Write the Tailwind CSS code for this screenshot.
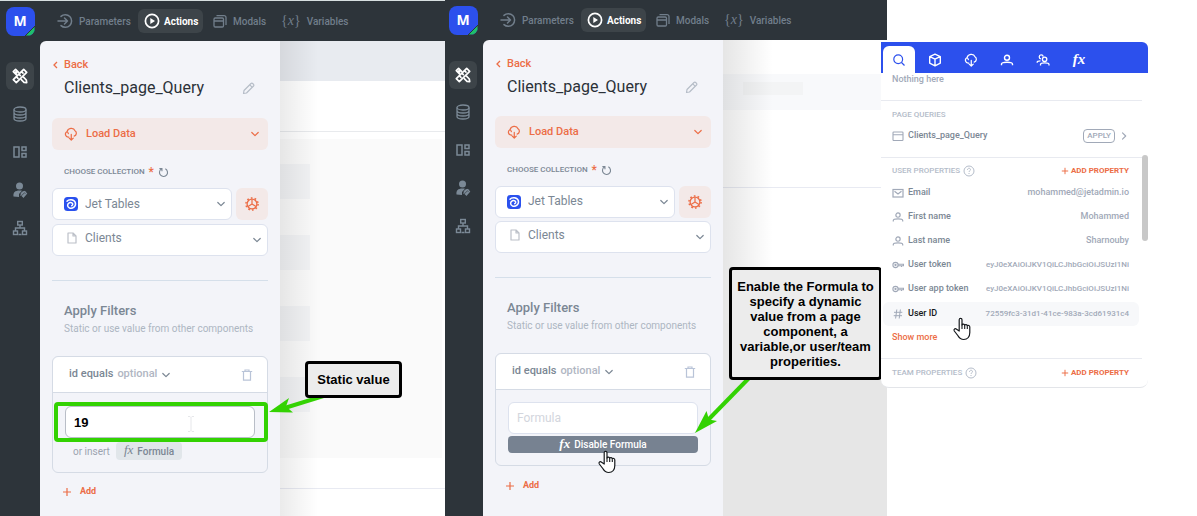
<!DOCTYPE html>
<html lang="en">
<head>
<meta charset="utf-8">
<meta name="viewport" content="width=device-width, initial-scale=1">
<title>Clients_page_Query</title>
<script src="https://cdn.jsdelivr.net/npm/@tailwindcss/browser@4"></script>
</head>
<body class="bg-white font-['Roboto','Noto_Sans',sans-serif] text-[#7b8794]">

<svg class="hidden" aria-hidden="true">
  <symbol id="enter" viewBox="0 0 16 16" fill="none" stroke="currentColor" stroke-width="1.5" stroke-linecap="round" stroke-linejoin="round"><path d="M4 3.400A6.300 6.300 0 1 1 4 12.600M1 8h9.500M7.500 5l3 3-3 3"/></symbol>
  <symbol id="play" viewBox="0 0 16 16"><circle cx="8" cy="8" r="6.600" fill="none" stroke="currentColor" stroke-width="1.700"/><path d="M6.300 5l4.700 3-4.700 3z" fill="currentColor"/></symbol>
  <symbol id="modals" viewBox="0 0 14 14" fill="none" stroke="currentColor" stroke-width="1.300" stroke-linejoin="round"><rect x="1" y="4" width="9.500" height="9" rx="1.200"/><path d="M1 7h9.500M3.500 1.600h7.500a2 2 0 0 1 2 2V11"/></symbol>
  <symbol id="tools" viewBox="0 0 16 16" fill="none" stroke="currentColor" stroke-width="1.700" stroke-linejoin="round" stroke-linecap="round"><path d="M1.300 3.600 3.600 1.300 6.800 4.500M4.500 6.800 1.300 3.600M9.300 11.600l2.700 2.700 2.700.400-.4-2.700-2.800-2.800M3.800 3.800l1 1"/><path d="M11.700 1.300 14.700 4.300 4.300 14.700 1.300 11.700zM9.500 3.700l1.500 1.500M7 6.300l1.400 1.400M4.500 8.800 6 10.300"/></symbol>
  <symbol id="database" viewBox="0 0 16 16" fill="none" stroke="currentColor" stroke-width="1.300"><ellipse cx="8" cy="3.500" rx="6" ry="2.500"/><path d="M2 3.500v9C2 14 4.700 15 8 15s6-1 6-2.500v-9M2 6.500C2 8 4.700 9 8 9s6-1 6-2.500M2 9.500C2 11 4.700 12 8 12s6-1 6-2.500"/></symbol>
  <symbol id="layout" viewBox="0 0 16 16" fill="none" stroke="currentColor" stroke-width="1.500"><rect x="2" y="3" width="5" height="10"/><rect x="10" y="3" width="4" height="3.500"/><rect x="10" y="9.500" width="4" height="3.500"/></symbol>
  <symbol id="userkey" viewBox="0 0 16 16"><circle cx="7.500" cy="4" r="3.500" fill="currentColor"/><path d="M1.500 14.500C1 10.500 3 8.500 7.500 8.500c1 0 1.800.1 2.500.3L7 12v3z" fill="currentColor"/><g fill="none" stroke="currentColor" stroke-width="1.200"><path d="M8.500 13.500l4-4 2 2-3.500 4M10 14.500l3-3M9 12c1-2 3-3.500 5-1.500"/></g></symbol>
  <symbol id="tree" viewBox="0 0 16 16" fill="none" stroke="currentColor" stroke-width="1.400"><rect x="5.700" y="1.500" width="4.600" height="3.500"/><rect x="1.500" y="11" width="4" height="3.500"/><rect x="10.500" y="11" width="4" height="3.500"/><path d="M8 5v3M3.500 11V8h9v3M6.500 14.500h3"/></symbol>
  <symbol id="cloud" viewBox="0 0 16 16" fill="none" stroke="currentColor" stroke-width="1.400" stroke-linecap="round" stroke-linejoin="round"><path d="M5.500 11.500H5A3.200 3.200 0 0 1 3.300 5.500M3.300 5.500C4.300 6 4.800 6.500 5 7.500M3.500 5.500C4.500.8 11 .3 12.600 4.300c2.400 1.600 1.900 5.300-1 6.200M8.300 8.500v6M6 12.700l2.300 2.200 2.300-2.200"/></symbol>
  <symbol id="down" viewBox="0 0 10 10" fill="none" stroke="currentColor" stroke-width="1.200" stroke-linecap="round" stroke-linejoin="round"><path d="M1.800 3.500 5 6.700l3.200-3.200"/></symbol>
  <symbol id="left" viewBox="0 0 6 10" fill="none" stroke="currentColor" stroke-width="1.300"><path d="M5 2 2 5l3 3"/></symbol>
  <symbol id="pencil" viewBox="0 0 14 14" fill="none" stroke="currentColor" stroke-width="1.200" stroke-linejoin="round"><path d="M1.500 12.500 2 9.500 9 2.500a1.200 1.200 0 0 1 1.700 0l.8.800a1.200 1.200 0 0 1 0 1.700L4.500 12zM7.800 3.800l2.500 2.500"/></symbol>
  <symbol id="reload" viewBox="0 0 12 12" fill="none" stroke="currentColor" stroke-width="1.200"><path d="M8 2a4.400 4.400 0 1 1-4.500.3M1.500 1.800h2.800v2.800"/></symbol>
  <symbol id="jet" viewBox="0 0 14 14"><rect width="14" height="14" rx="3.500" fill="#2a51ee"/><path d="M3 4.200C4.500 2.300 10 2 11.300 5.500 12.500 9.500 8.500 12 5.500 11 2.800 10 3 6.200 6 5.500c2.700-.4 3.600 2.300 1.700 3.200" fill="none" stroke="#fff" stroke-width="1.500" stroke-linecap="round"/></symbol>
  <symbol id="gear" viewBox="0 0 14 14" fill="none" stroke="currentColor"><circle cx="7" cy="7" r="4.900" stroke-width="1.300"/><circle cx="7" cy="7" r="6.100" stroke-width="1.500" stroke-dasharray="1.700 2.130"/><path d="M7 7V2.500M7 7l-4 2.500M7 7l4 2.500" stroke-width="1.200"/></symbol>
  <symbol id="file" viewBox="0 0 12 12" fill="none" stroke="currentColor" stroke-width="1.200" stroke-linejoin="round"><path d="M2 1h5l3 3v7H2zM7 1v3h3"/></symbol>
  <symbol id="trash" viewBox="0 0 12 12" fill="none" stroke="currentColor" stroke-width="1.200"><path d="M.8 2.500h10.400M4 2.300V1h4v1.300M2.500 2.500v8.700h7V2.500"/></symbol>
  <symbol id="plus" viewBox="0 0 10 10" fill="none" stroke="currentColor" stroke-width="1.200"><path d="M5 1v8M1 5h8"/></symbol>
  <symbol id="search" viewBox="0 0 14 14" fill="none" stroke="currentColor" stroke-width="1.200"><circle cx="6.200" cy="6.200" r="4.400"/><path d="M9.500 9.500 12.500 12.500"/></symbol>
  <symbol id="cube" viewBox="0 0 14 14" fill="none" stroke="currentColor" stroke-width="1.400" stroke-linejoin="round"><path d="M7 1.200 12.300 3.600v6.600L7 12.800l-5.300-2.600V3.600zM1.900 3.700 7 6.200l5.100-2.500M7 6.200v6.500"/></symbol>
  <symbol id="person" viewBox="0 0 14 14" fill="none" stroke="currentColor" stroke-width="1.400"><circle cx="7" cy="4.800" r="2.500"/><path d="M1.500 12.200V11c0-1 1-1.800 5.500-1.800S12.500 10 12.500 11v1.200"/></symbol>
  <symbol id="people" viewBox="0 0 14 14" fill="none" stroke="currentColor" stroke-width="1.300"><circle cx="8.600" cy="6.300" r="2.200"/><path d="M4.500 12.500v-1c0-1 1-1.600 4.100-1.600s4.400.6 4.400 1.600v1M7.200 3.600A2 2 0 1 0 5 5.900M1.200 9.800v-.6c0-.8 1-1.300 3.300-1.300"/></symbol>
  <symbol id="window" viewBox="0 0 12 12" fill="none" stroke="currentColor" stroke-width="1.100"><rect x="1" y="2" width="10" height="8.500" rx=".8"/><path d="M1 4.800h10"/></symbol>
  <symbol id="mail" viewBox="0 0 12 12" fill="none" stroke="currentColor" stroke-width="1.200"><rect x="1" y="2.500" width="10" height="7.500"/><path d="M2.500 4.200 6 7l3.500-2.800"/></symbol>
  <symbol id="key" viewBox="0 0 12 12" fill="none" stroke="currentColor" stroke-width="1.100"><circle cx="3.500" cy="6" r="2.600"/><circle cx="3.500" cy="6" r=".6"/><path d="M6 5.200h5.500v1.600H6M9.500 7v1"/></symbol>
  <symbol id="hash" viewBox="0 0 12 12" fill="none" stroke="currentColor" stroke-width="1"><path d="M4.800 1.500 3.600 10.500M8.400 1.500 7.200 10.500M2 4.300h8.300M1.700 7.700H10"/></symbol>
  <symbol id="help" viewBox="0 0 12 12" fill="none" stroke="currentColor" stroke-width="1"><circle cx="6" cy="6" r="5"/><path d="M4.500 4.800c0-2 3-2 3-.2C7.500 5.800 6 5.800 6 7M6 8v1"/></symbol>
  <symbol id="hand" viewBox="0 0 20 24"><path d="M7.200 14V2.800c0-2 2.800-2 2.800 0V8c.3-1.300 2.500-1.200 2.700.3.500-1 2.400-.9 2.600.6.700-.8 2.500-.5 2.500 1.100v5.500c0 4.300-2.500 7-6 7-3.200 0-4.600-1.500-6-4L2.300 14c-1-1.700.8-3 2.300-1.700z" fill="#fff" stroke="#15181c" stroke-width="1.200" stroke-linejoin="round"/><path d="M10 7.500V12M12.700 8.500V12M15.300 9.300V12" stroke="#15181c" stroke-width="1.100"/></symbol>
</svg>

<div class="flex min-h-screen overflow-hidden">

  <!-- Static value example -->
  <section class="relative flex grow shrink-0 basis-[445px] border-t border-[#d7dfe0] bg-[#2d343a]">
    <nav aria-label="Workspace" class="flex w-10 shrink-0 flex-col items-center pt-1.5 text-[#7b8996]">
      <a href="#" class="relative flex size-[29px] items-center justify-center overflow-hidden rounded-lg bg-[#2c50ed] pb-0.5 font-['Noto_Sans'] text-[14px] font-bold text-white">M<svg class="absolute right-0 bottom-0 size-[10px]" viewBox="0 0 10 10"><path d="M10 0v10H0z" fill="#1fbf6b" stroke="#2d343a"/></svg></a>
      <a href="#" aria-label="Build" class="mt-[26px] flex size-[28px] items-center justify-center rounded-md bg-[#3d4449] text-white"><svg class="size-4"><use href="#tools"/></svg></a>
      <div class="mt-4 flex flex-col gap-[22px]">
        <a href="#" aria-label="Data"><svg class="size-4"><use href="#database"/></svg></a>
        <a href="#" aria-label="Layout"><svg class="size-4"><use href="#layout"/></svg></a>
        <a href="#" aria-label="Access"><svg class="size-4"><use href="#userkey"/></svg></a>
        <a href="#" aria-label="Workflows"><svg class="size-4"><use href="#tree"/></svg></a>
      </div>
    </nav>
    <div class="flex min-w-0 grow flex-col">
      <header class="flex h-10 shrink-0 items-center pl-[17px] text-[10px] font-medium text-[#717e8b]">
        <a href="#" class="flex items-center gap-1.5"><svg class="size-4"><use href="#enter"/></svg><span class="w-[59px]">Parameters</span></a>
        <a href="#" class="flex h-6 w-[65px] items-center gap-1 rounded-md bg-[#3d4449] pl-1.5 font-bold text-white"><svg class="size-4 shrink-0"><use href="#play"/></svg>Actions</a>
        <a href="#" class="ml-2.5 flex w-[68px] items-center gap-1.5"><svg class="size-[14px]"><use href="#modals"/></svg>Modals</a>
        <a href="#" class="flex items-center gap-1.5"><span class="-mt-0.5 font-['Liberation_Serif'] text-[14px]">{<i>x</i>}</span>Variables</a>
      </header>
      <div class="flex grow">
        <main class="w-60 shrink-0 rounded-tl-md bg-[#f3f4f9] px-3 pt-4">
          <a href="#" class="flex h-4 items-center gap-1.5 text-[11px] font-medium text-[#ec6d46]"><svg class="h-[10px] w-1.5"><use href="#left"/></svg>Back</a>
          <div class="mt-[3px] flex h-6 items-center justify-between px-3">
            <h1 class="text-[16px] text-[#2b3138]">Clients_page_Query</h1>
            <button aria-label="Rename" class="text-[#b6bdc8]"><svg class="size-[14px]"><use href="#pencil"/></svg></button>
          </div>
          <button class="mt-[18px] flex h-8 w-full items-center gap-2 rounded-md bg-[#f3e9e8] px-3 text-[11px] font-medium text-[#ec6d46]"><svg class="size-[14px]"><use href="#cloud"/></svg>Load Data<svg class="-mr-1 ml-auto size-[10px]"><use href="#down"/></svg></button>
          <div class="mt-3.5 flex h-4 items-center px-3 text-[8px] font-medium"><label for="s1">CHOOSE COLLECTION</label><span class="ml-1 text-[12px] text-[#ec6d46]">*</span><button aria-label="Reload" class="ml-1"><svg class="size-[11px]"><use href="#reload"/></svg></button></div>
          <div class="mt-2 flex gap-1">
            <div class="grid grow items-center">
              <select id="s1" class="col-start-1 row-start-1 h-8 w-full appearance-none rounded-md border border-[#dde2ee] bg-white pl-8 text-[12px]"><option>Jet Tables</option></select>
              <svg class="pointer-events-none col-start-1 row-start-1 ml-3 size-[14px]"><use href="#jet"/></svg>
              <svg class="pointer-events-none col-start-1 row-start-1 mr-1.5 size-[10px] justify-self-end"><use href="#down"/></svg>
            </div>
            <button aria-label="Collection settings" class="flex size-8 items-center justify-center rounded-md bg-[#f3e9e8] text-[#ec6d46]"><svg class="size-[14px]"><use href="#gear"/></svg></button>
          </div>
          <div class="mt-1 grid items-center">
            <select aria-label="Table" class="col-start-1 row-start-1 h-8 w-full appearance-none rounded-md border border-[#dde2ee] bg-white pb-1 pl-8 text-[12px]"><option>Clients</option></select>
            <svg class="pointer-events-none col-start-1 row-start-1 mb-1 ml-3.5 size-3 text-[#bcc0c8]"><use href="#file"/></svg>
            <svg class="pointer-events-none col-start-1 row-start-1 mr-1.5 size-[10px] justify-self-end"><use href="#down"/></svg>
          </div>
          <hr class="mt-6 border-[#d5dfea]">
          <h2 class="mt-5 px-3 text-[13px] leading-5 font-medium">Apply Filters</h2>
          <p class="px-3 text-[10px] leading-4 whitespace-nowrap text-[#adb6c2]">Static or use value from other components</p>
          <div class="mt-[19px] rounded-md border border-[#d5dbe5]">
            <div class="flex h-9 items-center rounded-t-md border-b border-[#d5dbe5] bg-white px-4 text-[11px]">
              <button class="flex items-center gap-1 font-medium"><span>id equals</span><span class="text-[#b0b6c2]">optional</span><svg class="size-[10px]"><use href="#down"/></svg></button>
              <button aria-label="Delete filter" class="-mr-0.5 ml-auto text-[#b9c4d8]"><svg class="size-3"><use href="#trash"/></svg></button>
            </div>
            <div class="px-3 pt-[13px] pb-3">
              <div class="relative">
                <input aria-label="Filter value" value="19" class="block h-8 w-full rounded-md border border-[#b9bec7] bg-white px-2 font-['Liberation_Sans'] text-[13px] font-bold text-black">
                <svg class="pointer-events-none absolute top-2.5 right-[60px] h-4 w-2 text-[#e6e7ea]" viewBox="0 0 8 16" fill="none" stroke="currentColor"><path d="M1 .5h2l1 1 1-1h2M4 1.500v13M1 15.500h2l1-1 1 1h2"/></svg>
                <div class="pointer-events-none absolute -top-1 -right-[13px] -bottom-1 -left-[11px] rounded-sm border-4 border-[#33d202]"></div>
              </div>
              <div class="mt-1 flex h-[18px] items-center gap-1.5 pl-2 text-[10px] text-[#9ba3af]">or insert<button class="flex h-full items-center gap-1 rounded-sm bg-[#e1e6ea] px-2 font-medium text-[#7b8794]"><i class="-mt-0.5 font-['Liberation_Serif'] text-[13px]">fx</i>Formula</button></div>
            </div>
          </div>
          <button class="mt-[11px] flex h-4 items-center gap-2 pl-[10px] text-[9px] font-bold text-[#ec6d46]"><svg class="size-[10px]"><use href="#plus"/></svg>Add</button>
        </main>
        <div class="relative flex min-w-0 grow flex-col bg-white" aria-hidden="true">
          <div class="h-10 bg-[#e8ebf0]"></div>
          <div class="h-[50px]"></div>
          <div class="h-2 border-t border-[#e8eaed]"></div>
          <div class="mr-[3px] flex h-[319px] flex-col gap-9 bg-[#fafafa] pt-[25px]">
            <div class="h-[35px] w-[30px] bg-[#f2f3f5]"></div>
            <div class="h-[35px] w-[30px] bg-[#f2f3f5]"></div>
            <div class="h-[35px] w-[30px] bg-[#f2f3f5]"></div>
            <div class="h-[35px] w-[30px] bg-[#f2f3f5]"></div>
          </div>
          <div class="mt-[30px] border-t border-[#e8eaf2]"></div>
          <div class="absolute inset-y-0 left-0 w-[38px] bg-linear-to-r from-black/8 to-transparent"></div>
        </div>
      </div>
    </div>
    <svg class="pointer-events-none absolute top-[395px] left-[268px] h-5 w-[58px]" viewBox="268 396 58 20"><path d="M283 408.500 325 395.500" stroke="#33d202" stroke-width="4"/><path d="M269 412 289 398l-3 8.500 7 6z" fill="#33d202"/></svg>
    <div class="absolute top-[360px] left-[305px] flex h-[37px] w-[97px] items-center justify-center rounded-sm border-3 border-black bg-[#ececec] font-['Liberation_Sans'] text-[13px] font-bold text-black">Static value</div>
  </section>

  <!-- Formula example -->
  <section class="relative flex grow shrink-0 basis-[442px] bg-[#2d343a]">
    <nav aria-label="Workspace" class="flex w-[38px] shrink-0 flex-col items-center pt-1.5 pr-0.5 text-[#7b8996]">
      <a href="#" class="relative flex size-[29px] items-center justify-center overflow-hidden rounded-lg bg-[#2c50ed] pb-0.5 font-['Noto_Sans'] text-[14px] font-bold text-white">M<svg class="absolute right-0 bottom-0 size-[10px]" viewBox="0 0 10 10"><path d="M10 0v10H0z" fill="#1fbf6b" stroke="#2d343a"/></svg></a>
      <a href="#" aria-label="Build" class="mt-[26px] flex size-[28px] items-center justify-center rounded-md bg-[#3d4449] text-white"><svg class="size-4"><use href="#tools"/></svg></a>
      <div class="mt-[15px] flex flex-col gap-[22px]">
        <a href="#" aria-label="Data"><svg class="size-4"><use href="#database"/></svg></a>
        <a href="#" aria-label="Layout"><svg class="size-4"><use href="#layout"/></svg></a>
        <a href="#" aria-label="Access"><svg class="size-4"><use href="#userkey"/></svg></a>
        <a href="#" aria-label="Workflows"><svg class="size-4"><use href="#tree"/></svg></a>
      </div>
    </nav>
    <div class="flex min-w-0 grow flex-col">
      <header class="flex h-10 shrink-0 items-center pl-[17px] text-[10px] font-medium text-[#717e8b]">
        <a href="#" class="flex items-center gap-1.5"><svg class="size-4"><use href="#enter"/></svg><span class="w-[59px]">Parameters</span></a>
        <a href="#" class="flex h-6 w-[65px] items-center gap-1 rounded-md bg-[#3d4449] pl-1.5 font-bold text-white"><svg class="size-4 shrink-0"><use href="#play"/></svg>Actions</a>
        <a href="#" class="ml-2.5 flex w-[68px] items-center gap-1.5"><svg class="size-[14px]"><use href="#modals"/></svg>Modals</a>
        <a href="#" class="flex items-center gap-1.5"><span class="-mt-0.5 font-['Liberation_Serif'] text-[14px]">{<i>x</i>}</span>Variables</a>
      </header>
      <div class="flex grow">
        <main class="w-60 shrink-0 rounded-tl-md bg-[#f3f4f9] px-3 pt-4">
          <a href="#" class="flex h-4 items-center gap-1.5 text-[11px] font-medium text-[#ec6d46]"><svg class="h-[10px] w-1.5"><use href="#left"/></svg>Back</a>
          <div class="mt-[3px] flex h-6 items-center justify-between px-3">
            <h1 class="text-[16px] text-[#2b3138]">Clients_page_Query</h1>
            <button aria-label="Rename" class="text-[#b6bdc8]"><svg class="size-[14px]"><use href="#pencil"/></svg></button>
          </div>
          <button class="mt-[17px] flex h-8 w-full items-center gap-2 rounded-md bg-[#f3e9e8] px-3 text-[11px] font-medium text-[#ec6d46]"><svg class="size-[14px]"><use href="#cloud"/></svg>Load Data<svg class="-mr-1 ml-auto size-[10px]"><use href="#down"/></svg></button>
          <div class="mt-3.5 flex h-4 items-center px-3 text-[8px] font-medium"><label for="s2">CHOOSE COLLECTION</label><span class="ml-1 text-[12px] text-[#ec6d46]">*</span><button aria-label="Reload" class="ml-1"><svg class="size-[11px]"><use href="#reload"/></svg></button></div>
          <div class="mt-2 flex gap-1">
            <div class="grid grow items-center">
              <select id="s2" class="col-start-1 row-start-1 h-8 w-full appearance-none rounded-md border border-[#dde2ee] bg-white pb-0.5 pl-8 text-[12px]"><option>Jet Tables</option></select>
              <svg class="pointer-events-none col-start-1 row-start-1 ml-3 size-[14px]"><use href="#jet"/></svg>
              <svg class="pointer-events-none col-start-1 row-start-1 mr-1.5 size-[10px] justify-self-end"><use href="#down"/></svg>
            </div>
            <button aria-label="Collection settings" class="flex size-8 items-center justify-center rounded-md bg-[#f3e9e8] text-[#ec6d46]"><svg class="size-[14px]"><use href="#gear"/></svg></button>
          </div>
          <div class="mt-[3px] grid items-center">
            <select aria-label="Table" class="col-start-1 row-start-1 h-8 w-full appearance-none rounded-md border border-[#dde2ee] bg-white pb-1 pl-8 text-[12px]"><option>Clients</option></select>
            <svg class="pointer-events-none col-start-1 row-start-1 mb-1 ml-3.5 size-3 text-[#bcc0c8]"><use href="#file"/></svg>
            <svg class="pointer-events-none col-start-1 row-start-1 mr-1.5 size-[10px] justify-self-end"><use href="#down"/></svg>
          </div>
          <hr class="mt-6 border-[#d5dfea]">
          <h2 class="mt-5 px-3 text-[13px] leading-5 font-medium">Apply Filters</h2>
          <p class="px-3 text-[10px] leading-4 whitespace-nowrap text-[#adb6c2]">Static or use value from other components</p>
          <div class="mt-[19px] rounded-md border border-[#d5dbe5]">
            <div class="flex h-9 items-center rounded-t-md border-b border-[#d5dbe5] bg-white px-4 text-[11px]">
              <button class="flex items-center gap-1 font-medium"><span>id equals</span><span class="text-[#b0b6c2]">optional</span><svg class="size-[10px]"><use href="#down"/></svg></button>
              <button aria-label="Delete filter" class="-mr-0.5 ml-auto text-[#b9c4d8]"><svg class="size-3"><use href="#trash"/></svg></button>
            </div>
            <div class="px-3 pt-3 pb-3">
              <input aria-label="Formula" placeholder="Formula" class="block h-8 w-full rounded-md border border-[#dde2ee] bg-white px-2 text-[12px] placeholder:text-[#d3d6dd]">
              <div class="relative mt-0.5">
                <button class="flex h-[17px] w-full items-center justify-center gap-1 rounded-sm bg-[#778291] text-[10px] font-medium text-white"><i class="-mt-0.5 font-['Liberation_Serif'] text-[13px] font-bold">fx</i>Disable Formula</button>
                <svg class="pointer-events-none absolute top-3.5 left-[89px] h-6 w-5"><use href="#hand"/></svg>
              </div>
            </div>
          </div>
          <button class="mt-3 flex h-4 items-center gap-2 pl-[10px] text-[9px] font-bold text-[#ec6d46]"><svg class="size-[10px]"><use href="#plus"/></svg>Add</button>
        </main>
        <div class="relative flex min-w-0 grow flex-col bg-white" aria-hidden="true">
          <div class="h-[34px]"></div>
          <div class="flex h-9 items-start bg-[#f8f9fb] pt-2 pl-5"><div class="h-[13px] w-[60px] bg-[#f3f4f5]"></div></div>
          <div class="h-[77px]"></div>
          <div class="h-[136px] border-t border-[#e8eaf2]"></div>
          <div class="grow bg-[#e6e6e6]"></div>
          <div class="absolute top-0 left-0 h-[283px] w-[50px] bg-linear-to-r from-black/10 to-transparent"></div>
        </div>
      </div>
    </div>
    <svg class="pointer-events-none absolute top-[375px] left-[245px] h-[60px] w-[65px]" viewBox="690 375 65 60"><path d="M708 420 750 377" stroke="#33d202" stroke-width="4"/><path d="M695 433l11.500-22 2.500 8.500 8 1.500z" fill="#33d202"/></svg>
    <p class="absolute top-[267px] left-[284px] flex h-[113px] w-[153px] items-center justify-center rounded-sm border-3 border-black bg-[#ececec] text-center font-['Liberation_Sans'] text-[13px] leading-[15px] font-bold text-black"><span>Enable the Formula to<br>specify a dynamic<br>value from a page<br>component, a<br>variable,or user/team<br>properities.</span></p>
  </section>

  <!-- Value picker -->
  <div class="relative -ml-1.5 flex grow shrink-0 basis-[316px] items-start pt-[42px]">
    <aside class="w-[267px] overflow-hidden rounded-tr-md rounded-b-lg border-b border-[#e3e5e9] bg-white text-[9px] font-medium whitespace-nowrap">
      <div role="tablist" class="flex h-[31px] items-end bg-[#2c50ed] pl-0.5 text-white">
        <button role="tab" aria-selected="true" aria-label="Search" class="flex h-[27px] w-8 items-center justify-center rounded-t-md bg-white text-[#2c50ed]"><svg class="size-[14px]"><use href="#search"/></svg></button>
        <button role="tab" aria-label="Components" class="ml-0.5 flex h-[27px] w-9 items-center justify-center"><svg class="size-[14px]"><use href="#cube"/></svg></button>
        <button role="tab" aria-label="Queries" class="flex h-[27px] w-9 items-center justify-center"><svg class="size-[14px]"><use href="#cloud"/></svg></button>
        <button role="tab" aria-label="User" class="flex h-[27px] w-9 items-center justify-center"><svg class="size-[14px]"><use href="#person"/></svg></button>
        <button role="tab" aria-label="Team" class="flex h-[27px] w-9 items-center justify-center"><svg class="size-[14px]"><use href="#people"/></svg></button>
        <button role="tab" aria-label="Formula" class="flex h-[27px] w-9 items-center justify-center font-['Liberation_Serif'] text-[15px] font-bold italic">fx</button>
      </div>
      <div class="relative">
        <p class="pl-[11px] leading-3 text-[#a1a9b8]">Nothing here</p>
        <div class="mt-[15px] mr-1.5 border-t border-[#e8eaf0] pt-2 pr-[13px] pl-[11px]">
          <h3 class="text-[8px] leading-3 text-[#b4bcc9]">PAGE QUERIES</h3>
          <div class="mt-[7px] flex h-4 items-center"><svg class="mr-1 size-3 text-[#a1a9b8]"><use href="#window"/></svg><a href="#">Clients_page_Query</a><button class="ml-auto flex h-[14px] items-center rounded-sm border border-[#a1a9b8] px-[3px] text-[8px] text-[#a1a9b8]">APPLY</button><svg class="ml-1 size-[10px] -rotate-90 text-[#a1a9b8]"><use href="#down"/></svg></div>
        </div>
        <div class="mt-[13px] mr-1.5 border-t border-[#e8eaf0] pt-[7px]">
          <div class="flex h-3 items-center pr-[13px] pl-[11px] text-[8px] text-[#b4bcc9]">USER PROPERTIES<svg class="ml-[3px] size-3"><use href="#help"/></svg><button class="ml-auto flex items-center gap-0.5 font-bold text-[#ec6d46]"><svg class="size-2"><use href="#plus"/></svg>ADD PROPERTY</button></div>
          <ul class="mt-1 pr-[13px] pl-[11px]">
            <li class="flex h-6 items-center gap-1"><svg class="size-3 text-[#a1a9b8]"><use href="#mail"/></svg>Email<span class="ml-auto text-[#a1a9b8]">mohammed@jetadmin.io</span></li>
            <li class="flex h-6 items-center gap-1"><svg class="size-3 text-[#a1a9b8]"><use href="#person"/></svg>First name<span class="ml-auto text-[#a1a9b8]">Mohammed</span></li>
            <li class="flex h-6 items-center gap-1"><svg class="size-3 text-[#a1a9b8]"><use href="#person"/></svg>Last name<span class="ml-auto text-[#a1a9b8]">Sharnouby</span></li>
            <li class="flex h-6 items-center gap-1"><svg class="size-3 text-[#a1a9b8]"><use href="#key"/></svg>User token<span class="ml-auto text-[8px] text-[#a1a9b8]">eyJ0eXAiOiJKV1QiLCJhbGciOiJSUzI1Ni</span></li>
            <li class="flex h-6 items-center gap-1"><svg class="size-3 text-[#a1a9b8]"><use href="#key"/></svg>User app token<span class="ml-auto text-[8px] text-[#a1a9b8]">eyJ0eXAiOiJKV1QiLCJhbGciOiJSUzI1Ni</span></li>
            <li class="relative mt-px -mr-[10px] -ml-[9px] flex h-6 items-center gap-1 rounded-md bg-[#f7f8fa] pr-[10px] pl-[9px] text-[#15181c]"><svg class="size-3 text-[#a1a9b8]"><use href="#hash"/></svg>User ID<span class="ml-auto text-[8px] text-[#a1a9b8]">72559fc3-31d1-41ce-983a-3cd61931c4</span><svg class="pointer-events-none absolute top-[15px] left-[69px] h-6 w-5"><use href="#hand"/></svg></li>
          </ul>
          <button class="mt-[5px] ml-[11px] block leading-3 text-[#ec6d46]">Show more</button>
        </div>
        <div class="mt-[15px] mr-1.5 border-t border-[#e8eaf0] pt-2 pb-2">
          <div class="flex h-3 items-center pr-[13px] pl-[11px] text-[8px] text-[#b4bcc9]">TEAM PROPERTIES<svg class="ml-[3px] size-3"><use href="#help"/></svg><button class="ml-auto flex items-center gap-0.5 font-bold text-[#ec6d46]"><svg class="size-2"><use href="#plus"/></svg>ADD PROPERTY</button></div>
        </div>
        <div class="absolute top-[82px] right-0 h-[86px] w-1.5 rounded-full bg-[#c8c8c8]"></div>
      </div>
    </aside>
  </div>
</div>
</body>
</html>
